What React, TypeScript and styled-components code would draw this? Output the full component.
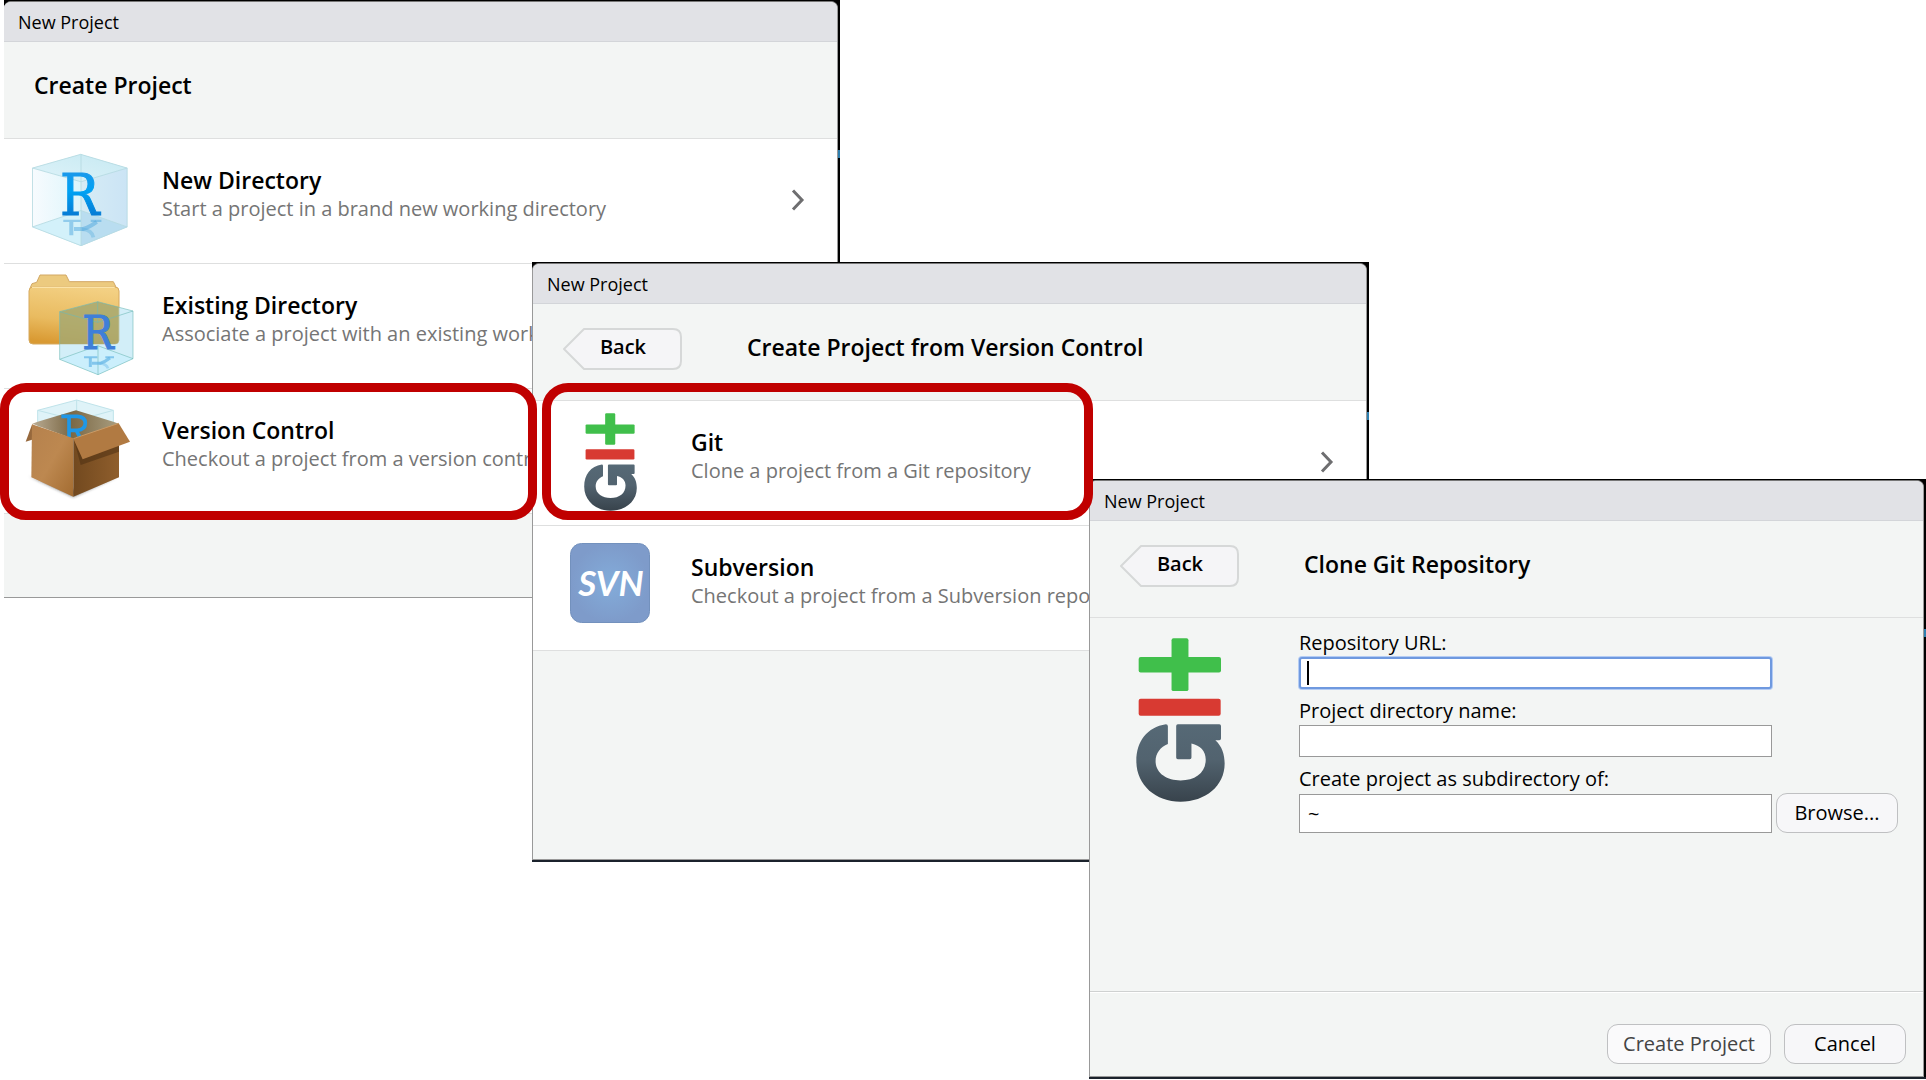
import React from "react";
import styled, { createGlobalStyle, css } from "styled-components";

const GlobalStyle = createGlobalStyle`
  *, *::before, *::after { box-sizing: border-box; }
  body {
    margin: 0;
    background: #fff;
    color: #000;
    font-family: "Open Sans", "Noto Sans", sans-serif;
    font-size: 20px;
  }
  button, input { font: inherit; color: inherit; }
`;

const Desktop = styled.main`
  position: relative;
  min-height: 100vh;
  overflow: hidden;
`;

/* Dark desktop that shows around each captured window */
const Frame = styled.section<{ $x: number; $y: number; $bare?: boolean }>`
  position: absolute;
  left: ${(p) => p.$x}px;
  top: ${(p) => p.$y}px;
  display: flex;
  width: ${(p) => (p.$bare ? 836 : 837)}px;
  height: ${(p) => (p.$bare ? 598 : 600)}px;
  padding: ${(p) => (p.$bare ? "1px 2px 0 0" : "1px 2px 2px 0")};
  background:
    linear-gradient(#2f7fae, #2f7fae) right 150px / 2px 8px no-repeat,
    linear-gradient(90deg, #1b222c, #1b222c) left bottom / 100% 2px no-repeat,
    #000;
`;

const Dialog = styled.div<{ $bare?: boolean }>`
  flex: 1;
  min-width: 0;
  display: flex;
  flex-direction: column;
  overflow: hidden;
  border: 1px solid #999;
  border-top-color: #777;
  ${(p) => p.$bare && css`border-left: 0;`}
  border-radius: 7px 7px 0 0;
  background: #f3f5f4;
`;

const TitleBar = styled.div`
  height: 40px;
  padding: 0 14px;
  border-bottom: 1px solid #d3d5d9;
  background: #e1e2e6;
  font-size: 18px;
  line-height: 40px;
`;

const Header = styled.header`
  display: flex;
  height: 97px;
  padding: 24px 30px 0;
  border-bottom: 1px solid #dedfdf;
`;

const Heading = styled.h1<{ $indent?: boolean }>`
  margin: 0 0 0 ${(p) => (p.$indent ? 64 : 0)}px;
  font-size: 23px;
  font-weight: 600;
  line-height: 38px;
`;

const BackButton = styled.button`
  position: relative;
  width: 120px;
  height: 42px;
  padding: 0 0 4px;
  border: 0;
  background: none;
  font-size: 20px;
  font-weight: 600;
  line-height: 38px;
  & > svg { position: absolute; inset: 0; }
  & > span { position: relative; }
`;

const Options = styled.ul`
  margin: 0;
  padding: 0;
  list-style: none;
`;

const Option = styled.button`
  display: grid;
  grid-template-columns: 106px 1fr 14px;
  gap: 28px;
  align-items: center;
  width: 100%;
  height: 125px;
  padding: 0 32px 3px 24px;
  border: 0;
  border-bottom: 1px solid #dedfdf;
  background: #fff;
  text-align: left;
  white-space: nowrap;
`;

const IconSlot = styled.span`
  display: flex;
  justify-content: center;
  & > svg { flex: none; }
`;

const OptionText = styled.span`
  display: flex;
  flex-direction: column;
  padding-bottom: 12px;
`;

const OptionTitle = styled.strong`
  font-size: 23px;
  font-weight: 600;
  line-height: 30px;
`;

const OptionNote = styled.span`
  color: #757575;
  line-height: 28px;
`;

const FormBody = styled.form`
  flex: 1;
  display: flex;
  flex-direction: column;
`;

const FormMain = styled.div`
  flex: 1;
  display: flex;
  gap: 74px;
  padding: 11px 25px 0 46px;
  border-bottom: 1px solid #cfd1d1;
  & > svg { margin-top: 9px; flex: none; }
`;

const Fields = styled.div`
  flex: 1;
  display: flex;
  flex-direction: column;
`;

const Label = styled.label`
  line-height: 28px;
  white-space: nowrap;
`;

const FieldRow = styled.div`
  display: grid;
  grid-template-columns: 1fr 122px;
  gap: 4px;
  align-items: end;
  margin-bottom: 8px;
`;

const TextField = styled.input<{ $focused?: boolean; $tall?: boolean }>`
  width: 100%;
  min-width: 0;
  height: ${(p) => (p.$tall ? 39 : 32)}px;
  padding: 0 8px;
  border: 1px solid #999;
  background: #fff;
  outline: 0;
  ${(p) =>
    p.$focused &&
    css`
      border: 2px solid #6f99df;
      border-radius: 3px;
      box-shadow: 0 0 0 1px #b4ccf4;
      background: linear-gradient(#000, #000) 6px center / 2px 24px no-repeat #fff;
    `}
`;

const PushButton = styled.button<{ $wide?: boolean }>`
  width: ${(p) => (p.$wide ? 164 : 122)}px;
  height: 40px;
  padding: 0 0 2px;
  border: 1px solid #bfc0c2;
  border-radius: 11px;
  background: #f7f7f9;
  white-space: nowrap;
  ${(p) => p.$wide && css`color: #444; background: #fafafb; font-weight: 500;`}
`;

const Footer = styled.footer`
  display: flex;
  justify-content: flex-end;
  gap: 13px;
  height: 84px;
  padding: 31px 17px 0;
  border-top: 1px solid #fff;
`;

const Callout = styled.div<{ $x: number; $w: number }>`
  position: absolute;
  left: ${(p) => p.$x}px;
  top: 383px;
  width: ${(p) => p.$w}px;
  height: 137px;
  border: 9px solid #c00000;
  border-radius: 26px;
  pointer-events: none;
`;

const Mark = styled.text`
  font-family: "DejaVu Serif Condensed", "DejaVu Serif", serif;
`;

const SvnWord = styled.text`
  font-family: Lato, sans-serif;
  font-size: 35px;
  font-weight: 700;
  font-style: italic;
`;

const Chevron = () => (
  <svg width="14" height="22" viewBox="0 0 14 22" aria-hidden="true">
    <path d="M2 1.5 11 11 2 20.5" fill="none" stroke="#6e6e70" strokeWidth="3" />
  </svg>
);

const CubeIcon = () => (
  <svg width="98" height="93" viewBox="97 70 292 278" aria-hidden="true">
    <defs>
      <linearGradient id="cubeL" x1="0" x2="1">
        <stop offset="0" stopColor="#f7fbfe" />
        <stop offset="1" stopColor="#def5fb" />
      </linearGradient>
      <linearGradient id="cubeR" x1="0" x2="1">
        <stop offset="0" stopColor="#d6ecf5" />
        <stop offset="1" stopColor="#cbe4f5" />
      </linearGradient>
      <linearGradient id="cubeT" x1="0" y1="1" x2="1" y2="0">
        <stop offset="0" stopColor="#dff3f9" />
        <stop offset="1" stopColor="#c6e9f2" />
      </linearGradient>
      <linearGradient id="cubeInk" x1="0" y1="0" x2="0" y2="1">
        <stop offset="0" stopColor="#2b93e6" />
        <stop offset="0.45" stopColor="#00a2f3" />
        <stop offset="1" stopColor="#0a66c4" />
      </linearGradient>
    </defs>
    <path d="M98 115 242 74 243 156V348L98 291Z" fill="url(#cubeL)" />
    <path d="M242 74 381 115V291L243 348Z" fill="url(#cubeR)" />
    <path d="M242 74 381 115 243 156 98 115Z" fill="url(#cubeT)" />
    <path d="M98 291 243 242V348Z" fill="#d3f1fa" />
    <path d="M381 291 243 242V348Z" fill="#b9ddf0" />
    <path
      d="M98 115 242 74 381 115V291L243 347 98 291ZM98 115 243 156 381 115M243 74V347M98 291 243 242 381 291"
      fill="none"
      stroke="#b5dae1"
      strokeWidth="2.5"
    />
    <g fill="none" stroke="#4fa8dd" strokeOpacity="0.5">
      <path d="M190 273H242M272 273H304" strokeWidth="7" />
      <path d="M214 276V316M290 276Q268 292 250 297H222" strokeWidth="12" />
      <path d="M246 298Q276 300 280 322" strokeWidth="11" strokeOpacity="0.35" />
    </g>
    <Mark x="180" y="254" fontSize="174" fill="url(#cubeInk)" stroke="url(#cubeInk)" strokeWidth="3">
      R
    </Mark>
  </svg>
);

const FolderIcon = () => (
  <svg width="106" height="102" viewBox="86 40 318 304" aria-hidden="true">
    <defs>
      <linearGradient id="fold" x1="0.6" y1="0" x2="0.4" y2="1">
        <stop offset="0" stopColor="#f3d083" />
        <stop offset="0.6" stopColor="#e9bb60" />
        <stop offset="1" stopColor="#d99a33" />
      </linearGradient>
    </defs>
    <path d="M92 82 98 68 112 64 122 42H200L210 62H342L352 82Z" fill="#ecca7f" stroke="#d2a865" strokeWidth="3" />
    <rect x="89" y="78" width="270" height="171" rx="12" fill="url(#fold)" stroke="#d6a95f" strokeWidth="3" />
    <path d="M98 79H346" stroke="#fbe3a8" strokeWidth="4" />
    <path d="M181 152 295 122 401 150V293L296 341 181 295Z" fill="#b4e2f3" fillOpacity="0.6" />
    <path d="M181 152 295 122 358 138V238Q358 249 346 249H181Z" fill="#a0913c" fillOpacity="0.6" />
    <path d="M181 295 295 254 401 293 296 341Z" fill="#c9effc" fillOpacity="0.8" />
    <path
      d="M181 152 295 122 401 150V293L296 341 181 295ZM181 152 295 184 401 150M296 254V341M295 122V184M181 295 295 254 401 293"
      fill="none"
      stroke="#6db9b5"
      strokeOpacity="0.7"
      strokeWidth="2.5"
    />
    <g fill="none" stroke="#63b5e6" strokeOpacity="0.7">
      <path d="M254 289H294M318 289H344" strokeWidth="6" />
      <path d="M273 290V318M332 291Q318 302 302 307H278" strokeWidth="9" />
      <path d="M300 307Q322 308 326 322" strokeWidth="8" strokeOpacity="0.4" />
    </g>
    <Mark x="249" y="264" fontSize="139" fill="#3f7fd8" stroke="#3f7fd8" strokeWidth="3">
      R
    </Mark>
  </svg>
);

const BoxIcon = () => (
  <svg width="112" height="102" viewBox="75 68 336 306" aria-hidden="true">
    <defs>
      <linearGradient id="boxL" x1="0" y1="0" x2="1" y2="1">
        <stop offset="0" stopColor="#b5814d" />
        <stop offset="0.5" stopColor="#bd8850" />
        <stop offset="1" stopColor="#a36c31" />
      </linearGradient>
      <linearGradient id="boxR" x1="0" x2="1">
        <stop offset="0" stopColor="#72491f" />
        <stop offset="1" stopColor="#8f5e2c" />
      </linearGradient>
      <linearGradient id="boxIn" x1="0" x2="1">
        <stop offset="0" stopColor="#b9ab93" />
        <stop offset="0.45" stopColor="#7b6845" />
        <stop offset="1" stopColor="#a99e80" />
      </linearGradient>
      <filter id="boxSoft">
        <feGaussianBlur stdDeviation="5" />
      </filter>
    </defs>
    <path d="M88 300 220 362 350 302 220 340Z" fill="#222" fillOpacity="0.6" filter="url(#boxSoft)" />
    <path d="M113 102 230 71 340 102V150H113Z" fill="#dff3f8" stroke="#bfe3ea" strokeWidth="3" />
    <path d="M113 102 230 132 340 102M230 71V110" fill="none" stroke="#bfe3ea" strokeWidth="3" />
    <path d="M97 142 113 136 228 102 340 136 356 142 220 188Z" fill="url(#boxIn)" />
    <path d="M97 142 77 196 96 190Z" fill="#96683c" />
    <path
      d="M184 120H232Q256 122 256 140Q256 160 232 162H204M207 120V184M230 164 240 184"
      fill="none"
      stroke="#1f98e8"
      strokeWidth="11"
    />
    <path d="M96 144 220 186V361L94 303Z" fill="url(#boxL)" />
    <path d="M220 186 357 146V303L220 361Z" fill="url(#boxR)" />
    <path d="M222 190 242 266 357 226V206Z" fill="#4d3013" fillOpacity="0.55" />
    <path d="M220 187 356 141 390 196 248 249Z" fill="#b17a42" />
    <path d="M220 187 356 141" stroke="#c99a66" strokeWidth="3" />
  </svg>
);

const GitIcon = ({ width, height }: { width: number; height: number }) => {
  const ink = `gitInk${width}`;
  return (
    <svg width={width} height={height} viewBox="106 54 268 494" aria-hidden="true">
      <defs>
        <linearGradient id={ink} x1="0" y1="0" x2="0" y2="1">
          <stop offset="0" stopColor="#566976" />
          <stop offset="0.45" stopColor="#52636f" />
          <stop offset="1" stopColor="#38434c" />
        </linearGradient>
      </defs>
      <rect x="114" y="111" width="248" height="47" rx="6" fill="#40bf4b" />
      <rect x="213" y="55" width="51" height="159" rx="6" fill="#40bf4b" />
      <rect x="114" y="237" width="247" height="51" rx="6" fill="#d83a32" />
      <path
        d="M196 314Q202 314 202 320V373C180 382 165 400 165 425C165 462 200 483 240 483C285 483 316 460 316 420C316 395 300 378 273 372V414Q273 419 268 419H232Q227 419 227 414V319Q227 314 232 314H357Q362 314 362 319V357Q362 362 357 362H345C365 380 373 405 373 432C373 500 315 547 240 547C165 547 107 497 107 425C107 365 140 323 196 314Z"
        fill={`url(#${ink})`}
      />
    </svg>
  );
};

const SvnIcon = () => (
  <svg width="80" height="88" viewBox="0 0 80 88" role="img" aria-label="SVN">
    <defs>
      <radialGradient id="svnBg">
        <stop offset="0" stopColor="#83acda" />
        <stop offset="1" stopColor="#7e9bca" />
      </radialGradient>
    </defs>
    <rect x="0.5" y="0.5" width="79" height="79" rx="11" fill="url(#svnBg)" stroke="#7391bd" />
    <SvnWord x="41" y="53" textAnchor="middle" fill="#fff">
      SVN
    </SvnWord>
  </svg>
);

const Back = () => (
  <BackButton type="button">
    <svg width="120" height="42" viewBox="0 0 120 42" aria-hidden="true">
      <path
        d="M21 1H110Q118 1 118 9V33Q118 41 110 41H21L1 21Z"
        fill="#f5f5f7"
        stroke="#d6d8d8"
        strokeWidth="2"
        strokeLinejoin="round"
      />
    </svg>
    <span>Back</span>
  </BackButton>
);

type Choice = { title: string; note: string; icon: React.ReactNode };

const projectChoices: Choice[] = [
  { title: "New Directory", note: "Start a project in a brand new working directory", icon: <CubeIcon /> },
  { title: "Existing Directory", note: "Associate a project with an existing working directory", icon: <FolderIcon /> },
  { title: "Version Control", note: "Checkout a project from a version control repository", icon: <BoxIcon /> },
];

const vcsChoices: Choice[] = [
  { title: "Git", note: "Clone a project from a Git repository", icon: <GitIcon width={53} height={98} /> },
  { title: "Subversion", note: "Checkout a project from a Subversion repository", icon: <SvnIcon /> },
];

const ChoiceList = ({ items }: { items: Choice[] }) => (
  <Options>
    {items.map((item) => (
      <li key={item.title}>
        <Option type="button">
          <IconSlot>{item.icon}</IconSlot>
          <OptionText>
            <OptionTitle>{item.title}</OptionTitle>
            <OptionNote>{item.note}</OptionNote>
          </OptionText>
          <Chevron />
        </Option>
      </li>
    ))}
  </Options>
);

type WindowProps = {
  x: number;
  y: number;
  heading: string;
  back?: boolean;
  children: React.ReactNode;
};

const ProjectWindow = ({ x, y, heading, back, children }: WindowProps) => (
  <Frame $x={x} $y={y} $bare={!back}>
    <Dialog role="dialog" aria-label={heading} $bare={!back}>
      <TitleBar>New Project</TitleBar>
      <Header>
        {back && <Back />}
        <Heading $indent={back}>{heading}</Heading>
      </Header>
      {children}
    </Dialog>
  </Frame>
);

export default function App() {
  return (
    <>
      <GlobalStyle />
      <Desktop>
        <ProjectWindow x={4} y={0} heading="Create Project">
          <ChoiceList items={projectChoices} />
        </ProjectWindow>

        <ProjectWindow x={532} y={262} heading="Create Project from Version Control" back>
          <ChoiceList items={vcsChoices} />
        </ProjectWindow>

        <ProjectWindow x={1089} y={479} heading="Clone Git Repository" back>
          <FormBody onSubmit={(e) => e.preventDefault()}>
            <FormMain>
              <GitIcon width={89} height={164} />
              <Fields>
                <Label htmlFor="repo-url">Repository URL:</Label>
                <FieldRow>
                  <TextField id="repo-url" $focused />
                </FieldRow>
                <Label htmlFor="dir-name">Project directory name:</Label>
                <FieldRow>
                  <TextField id="dir-name" />
                </FieldRow>
                <Label htmlFor="parent-dir">Create project as subdirectory of:</Label>
                <FieldRow>
                  <TextField id="parent-dir" defaultValue="~" $tall />
                  <PushButton type="button">Browse...</PushButton>
                </FieldRow>
              </Fields>
            </FormMain>
            <Footer>
              <PushButton type="submit" $wide>
                Create Project
              </PushButton>
              <PushButton type="button">Cancel</PushButton>
            </Footer>
          </FormBody>
        </ProjectWindow>

        <Callout $x={0} $w={537} />
        <Callout $x={542} $w={551} />
      </Desktop>
    </>
  );
}
